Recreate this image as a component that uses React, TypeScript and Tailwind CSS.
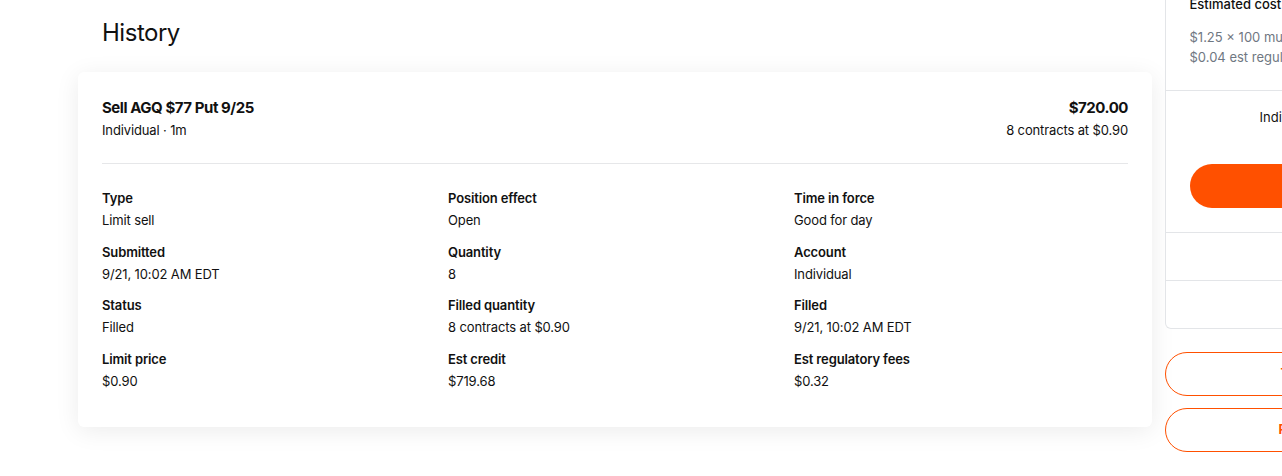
import React from "react";

const details = [
  { label: "Type", value: "Limit sell" },
  { label: "Position effect", value: "Open" },
  { label: "Time in force", value: "Good for day" },
  { label: "Submitted", value: "9/21, 10:02 AM EDT" },
  { label: "Quantity", value: "8" },
  { label: "Account", value: "Individual" },
  { label: "Status", value: "Filled" },
  { label: "Filled quantity", value: "8 contracts at $0.90" },
  { label: "Filled", value: "9/21, 10:02 AM EDT" },
  { label: "Limit price", value: "$0.90" },
  { label: "Est credit", value: "$719.68" },
  { label: "Est regulatory fees", value: "$0.32" },
];

export default function App() {
  return (
    <div className="w-[1282px] h-[476px] overflow-hidden bg-white flex text-[#111111] font-['Inter',sans-serif]">
      {/* Order history */}
      <div className="w-[1152px] shrink-0 pl-[78px]">
        <h1 className="pl-6 pt-[17px] mb-[23px] text-2xl leading-8 font-normal tracking-[-0.02em]">History</h1>

        <div className="bg-white rounded-md shadow-[0_4px_24px_rgba(0,0,0,0.08)] px-6 pt-6 pb-[34px]">
          <div className="flex justify-between border-b border-[#e6e7e9] pb-[23px]">
            <div>
              <p className="text-[15px] leading-6 font-bold tracking-[-0.03em]">Sell AGQ $77 Put 9/25</p>
              <p className="text-[13px] leading-5 tracking-[-0.01em]">Individual · 1m</p>
            </div>
            <div className="text-right">
              <p className="text-[15px] leading-6 font-bold tracking-[-0.03em]">$720.00</p>
              <p className="text-[13px] leading-5 tracking-[-0.01em]">8 contracts at $0.90</p>
            </div>
          </div>

          <div className="grid grid-cols-3 gap-x-3 gap-y-[9.7px] pt-6">
            {details.map((d) => (
              <div key={d.label}>
                <p className="text-[13px] leading-5 font-semibold tracking-[-0.01em]">{d.label}</p>
                <p className="text-[13px] leading-6 tracking-[-0.01em]">{d.value}</p>
              </div>
            ))}
          </div>
        </div>
      </div>

      {/* Order panel (partially visible) */}
      <div className="ml-[12.5px] w-[300px] shrink-0">
        <div className="-mt-[6px] border border-t-0 border-[#e3e5e8] rounded-b-md bg-white">
          <div className="pl-6 pb-[23px] whitespace-nowrap">
            <p className="text-[13px] leading-5 font-medium">Estimated cost</p>
            <p className="mt-[13px] text-[13px] leading-5 text-[#6f7782]">$1.25 × 100 multiplier</p>
            <p className="text-[13px] leading-5 text-[#6f7782]">$0.04 est regulatory fees</p>
          </div>
          <div className="border-t border-[#e3e5e8] pt-4 pb-6">
            <p className="pl-[94px] text-[13px] leading-5 whitespace-nowrap">Individual · $1,204.18 buying power available</p>
            <div className="mt-[37px] ml-6 h-11 rounded-full bg-[#ff5000] flex items-center justify-center text-white text-[13px] font-bold">
              Review order
            </div>
          </div>
          <div className="border-t border-[#e3e5e8] h-12"></div>
          <div className="border-t border-[#e3e5e8] h-12"></div>
        </div>

        <div className="mt-[23px] flex flex-col gap-3">
          <div className="h-11 rounded-full border border-[#ff5000] flex items-center pl-[115px] text-[13px] font-bold text-[#ff5000] whitespace-nowrap">
            Trade AGQ options
          </div>
          <div className="h-11 rounded-full border border-[#ff5000] flex items-center pl-[113px] text-[13px] font-bold text-[#ff5000] whitespace-nowrap">
            Replace order
          </div>
        </div>
      </div>
    </div>
  );
}
